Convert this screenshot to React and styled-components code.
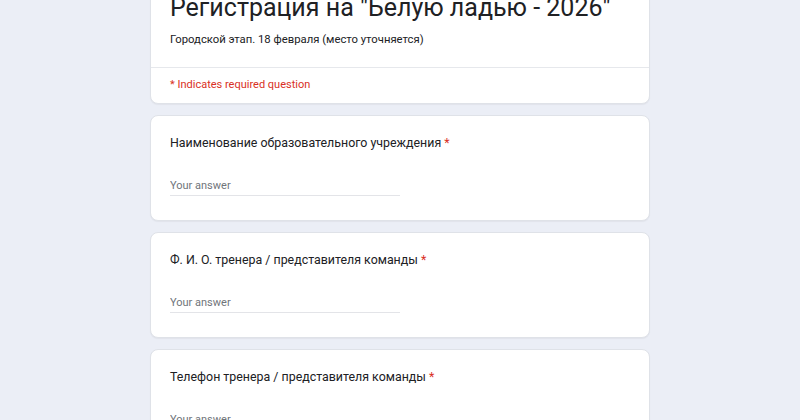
import styled, { createGlobalStyle } from "styled-components";

const GlobalStyle = createGlobalStyle`
  html, body {
    margin: 0;
    padding: 0;
    background: #ebeef6;
    font-family: Roboto, "Noto Sans", Arial, sans-serif;
    color: #202124;
  }
`;

const questions = [
  "Наименование образовательного учреждения",
  "Ф. И. О. тренера / представителя команды",
  "Телефон тренера / представителя команды",
];

const App = () => {
  return (
    <Page>
      <GlobalStyle />
      <Form>
        <HeaderCard>
          <HeaderTop>
            <Title>Регистрация на "Белую ладью - 2026"</Title>
            <Description>Городской этап. 18 февраля (место уточняется)</Description>
          </HeaderTop>
          <RequiredNote>* Indicates required question</RequiredNote>
        </HeaderCard>
        {questions.map((q) => (
          <QuestionCard key={q}>
            <QuestionTitle>
              {q} <Star>*</Star>
            </QuestionTitle>
            <AnswerInput placeholder="Your answer" />
          </QuestionCard>
        ))}
      </Form>
    </Page>
  );
};

const Page = styled.div`
  height: 420px;
  overflow: hidden;
`;

const Form = styled.div`
  width: 500px;
  margin: -30px auto 0;
  display: flex;
  flex-direction: column;
  gap: 11px;
`;

const Card = styled.div`
  background: #fff;
  border: 1px solid #dfe2e8;
  border-radius: 8px;
  box-shadow: 0 1px 1px rgba(60, 64, 67, 0.06);
`;

const HeaderCard = styled(Card)``;

const HeaderTop = styled.div`
  padding: 21px 19px 19px;
  border-bottom: 1px solid #e6e8ec;
`;

const Title = styled.div`
  font-size: 25px;
  line-height: 32px;
  font-weight: 400;
  color: #202124;
`;

const Description = styled.div`
  margin-top: 8px;
  font-size: 11.3px;
  line-height: 16px;
  color: #202124;
`;

const RequiredNote = styled.div`
  padding: 9px 19px 10px;
  font-size: 11px;
  line-height: 16px;
  color: #d93025;
`;

const QuestionCard = styled(Card)`
  padding: 17px 19px 24px;
`;

const QuestionTitle = styled.div`
  font-size: 12.4px;
  line-height: 20px;
  color: #202124;
`;

const Star = styled.span`
  color: #d93025;
`;

const AnswerInput = styled.input`
  display: block;
  margin-top: 24px;
  width: 230px;
  box-sizing: border-box;
  border: none;
  border-bottom: 1px solid #e3e4e8;
  padding: 0 0 2px;
  font-family: inherit;
  font-size: 11px;
  line-height: 16px;
  height: 19px;
  outline: none;
  background: transparent;
  color: #202124;

  &::placeholder {
    color: #70757a;
  }
`;

export default App;
